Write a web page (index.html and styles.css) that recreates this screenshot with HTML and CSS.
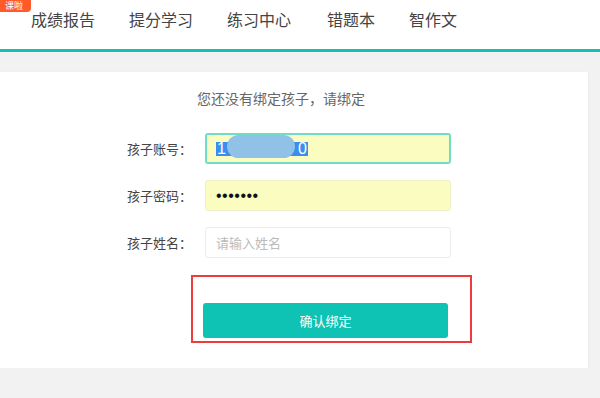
FILE: index.html
```html
<!DOCTYPE html>
<html lang="zh-CN">
<head>
    <meta charset="UTF-8">
    <meta name="viewport" content="width=device-width, initial-scale=1.0">
    <title>绑定孩子</title>
    <link rel="stylesheet" href="styles.css">
</head>
<body>
    <header>
        <span class="badge">课啦</span>
        <nav>
            <a href="#">成绩报告</a>
            <a href="#">提分学习</a>
            <a href="#">练习中心</a>
            <a href="#">错题本</a>
            <a href="#">智作文</a>
        </nav>
    </header>

    <div class="card">
        <p class="tip">您还没有绑定孩子，请绑定</p>

        <!-- 绑定表单 -->
        <form class="bind-form">
            <div class="form-row">
                <label>孩子账号：</label>
                <div class="field focus">
                    <span class="sel">1<span class="gap"></span>0<span class="mask"></span></span>
                </div>
            </div>
            <div class="form-row">
                <label for="pwd">孩子密码：</label>
                <input type="password" id="pwd" class="field filled" value="1234567">
            </div>
            <div class="form-row">
                <label for="cname">孩子姓名：</label>
                <input type="text" id="cname" class="field" placeholder="请输入姓名">
            </div>
            <div class="btn-row">
                <button type="button" class="btn">确认绑定</button>
                <span class="mark"></span>
            </div>
        </form>
    </div>
</body>
</html>
```

FILE: styles.css
```css
body {
    margin: 0;
    background-color: #f2f2f2;
    font-family: "Microsoft YaHei", "Noto Sans CJK SC", "Noto Sans", sans-serif;
    overflow: hidden;
}
header {
    position: relative;
    height: 49px;
    background: white;
    border-bottom: 3px solid #12c1b1;
}
.badge {
    position: absolute;
    left: 0;
    top: 0;
    width: 31px;
    height: 12px;
    padding: 1px 0 0 5px;
    box-sizing: border-box;
    background: #ff5b2a;
    color: white;
    font-size: 9px;
    line-height: 10px;
    border-bottom-right-radius: 4px;
}
nav {
    display: flex;
    gap: 34px;
    padding: 8px 0 0 31px;
}
nav a {
    color: #444;
    font-size: 16px;
    line-height: 22px;
    text-decoration: none;
}
nav a:nth-child(4) {
    margin-left: 2px;
}
.card {
    margin: 20px 0 0 -26px;
    width: 614px;
    height: 296px;
    padding-top: 16px;
    box-sizing: border-box;
    background: white;
    box-shadow: 0 1px 3px rgba(0, 0, 0, 0.06);
}
.tip {
    margin: 0;
    text-align: center;
    color: #666;
    font-size: 14px;
    line-height: 21px;
}
.bind-form {
    margin-top: 24px;
    padding-left: 138px;
}
.form-row {
    display: flex;
    align-items: center;
    margin-bottom: 16px;
}
.form-row label {
    width: 80px;
    margin-right: 13px;
    text-align: right;
    color: #444;
    font-size: 13px;
}
.field {
    width: 246px;
    height: 31px;
    box-sizing: border-box;
    padding: 0 10px;
    border: 1px solid #ececec;
    border-radius: 3px;
    background: white;
    font-family: inherit;
    font-size: 13px;
    outline: none;
}
.field::placeholder {
    color: #bbb;
}
.field.filled {
    background: #fafcc0;
    border-color: #f0f2c8;
    color: #111;
    font-family: "Liberation Sans", sans-serif;
    font-size: 16px;
    letter-spacing: 0.5px;
}
.field.focus {
    display: flex;
    align-items: center;
    background: #fafcc0;
    border: 2px solid #6fdcc6;
    padding-left: 9px;
}
.sel {
    position: relative;
    background: #3b8ef0;
    color: white;
    font-family: "Liberation Sans", sans-serif;
    font-size: 16px;
    line-height: 14px;
    padding: 0 1px;
}
.gap {
    display: inline-block;
    width: 72px;
}
.mask {
    position: absolute;
    left: 11px;
    top: -7px;
    width: 68px;
    height: 23px;
    border-radius: 12px;
    background: #8fc2e6;
}
.btn-row {
    position: relative;
    margin-top: 45px;
    padding-left: 91px;
}
.btn {
    width: 245px;
    height: 35px;
    border: none;
    border-radius: 3px;
    background: #0fc3b4;
    color: white;
    font-family: inherit;
    font-size: 13px;
    cursor: pointer;
}
.mark {
    position: absolute;
    left: 79px;
    top: -28px;
    width: 281px;
    height: 68px;
    box-sizing: border-box;
    border: 2px solid #ee3b3b;
}
```
